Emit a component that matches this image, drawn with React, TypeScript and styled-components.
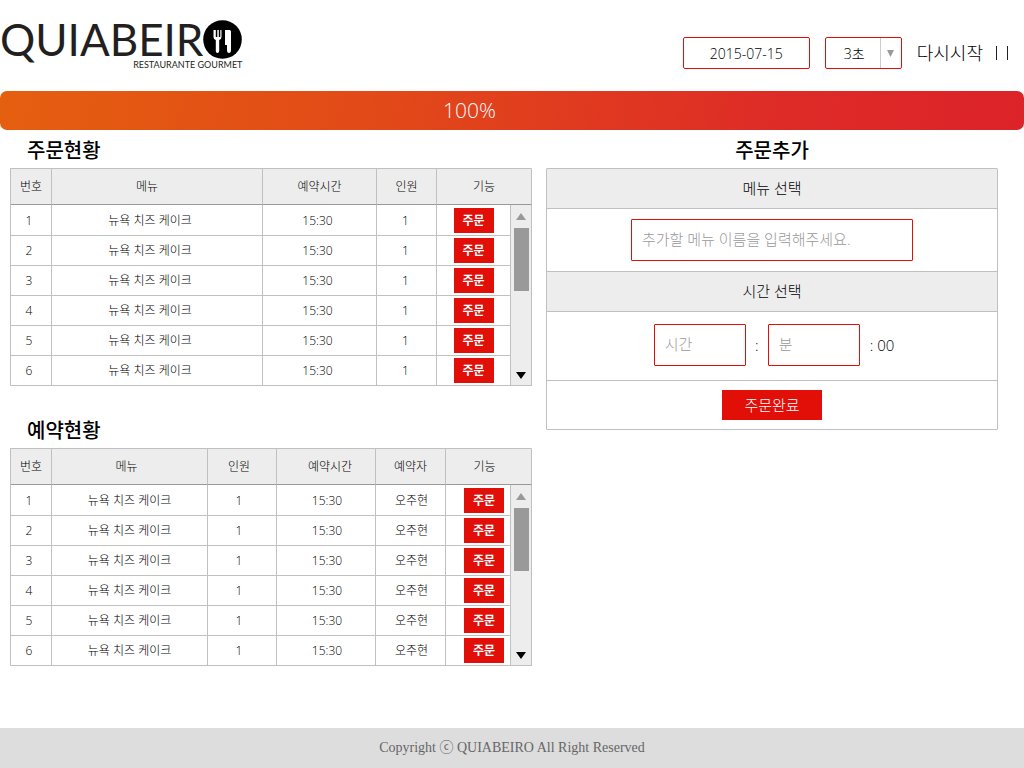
import React from "react";
import styled, { createGlobalStyle } from "styled-components";

const RED = "#e20e08";
const LINE = "#c0c0c0";
const SHADE = "#ededed";

const GlobalStyle = createGlobalStyle`
  * { box-sizing: border-box; }
  body {
    margin: 0;
    background: #fff;
    color: #000;
    font-family: "Open Sans", "Noto Sans CJK KR", sans-serif;
    font-weight: 300;
  }
  button, input, select { font: inherit; color: inherit; }
`;

const Page = styled.div`
  display: flex;
  flex-direction: column;
  min-height: 100vh;
`;

const Header = styled.header`
  display: flex;
  justify-content: space-between;
  align-items: flex-start;
  height: 91px;
  padding-right: 16px;
`;

const Logo = styled.a`
  display: flex;
  flex-direction: column;
  align-items: flex-end;
  padding-top: 20px;
  color: #231f20;
  font-family: Lato, sans-serif;
  text-decoration: none;
`;

const LogoTop = styled.span`
  display: flex;
  height: 39px;
`;

const LogoWord = styled.span`
  font-size: 44px;
  line-height: 39px;
  font-weight: 400;
`;

const LogoSub = styled.span`
  font-size: 9px;
  line-height: 12px;
  font-weight: 400;
`;

const Controls = styled.form`
  display: flex;
  align-items: center;
  padding-top: 37px;
`;

const DateInput = styled.input`
  width: 127px;
  height: 32px;
  margin-right: 15px;
  padding: 0;
  border: 1px solid ${RED};
  border-radius: 2px;
  background: #fff;
  font-size: 14px;
  text-align: center;
`;

const SelectWrap = styled.div`
  position: relative;
  width: 77px;
  height: 32px;
  margin-right: 15px;
`;

const Select = styled.select`
  width: 100%;
  height: 100%;
  padding: 0 22px 0 18px;
  appearance: none;
  border: 1px solid ${RED};
  border-radius: 2px;
  background: #fff;
  font-size: 14px;
`;

const SelectArrow = styled.span`
  position: absolute;
  top: 1px;
  right: 1px;
  bottom: 1px;
  display: flex;
  align-items: center;
  justify-content: center;
  width: 21px;
  border-left: 1px solid #ccc;
  pointer-events: none;
`;

const Restart = styled.button`
  display: flex;
  align-items: center;
  gap: 12px;
  padding: 0;
  border: 0;
  background: none;
  font-size: 18px;
  line-height: 32px;
`;

const Progress = styled.div`
  height: 39px;
  padding-right: 85px;
  border-radius: 7px;
  background: linear-gradient(100deg, #e55f10 0%, #e24a18 36%, #de2b27 76%, #dc2329 100%);
  color: #fff;
  font-size: 21px;
  line-height: 39px;
  text-align: center;
`;

const Main = styled.main`
  display: grid;
  grid-template-columns: 522fr 452fr;
  align-items: start;
  gap: 14px;
  flex: 1;
  padding: 0 26px 20px 10px;
`;

const Lists = styled.div`
  display: flex;
  flex-direction: column;
  gap: 24px;
`;

const Heading = styled.h2<{ $center?: boolean }>`
  height: 38px;
  margin: 0;
  padding-left: ${(p) => (p.$center ? 0 : 17)}px;
  color: #000;
  font-size: 20px;
  line-height: 42px;
  font-weight: 500;
  text-align: ${(p) => (p.$center ? "center" : "left")};
`;

const Table = styled.table`
  width: 100%;
  table-layout: fixed;
  border-spacing: 0;
  border-top: 1px solid ${LINE};
  border-left: 1px solid ${LINE};
  border-radius: 1px;
  font-size: 12px;
  line-height: 18px;
`;

const Col = styled.col<{ $w?: number }>`
  width: ${(p) => (p.$w ? `${p.$w}px` : "auto")};
`;

const Th = styled.th<{ $left?: number; $right?: number }>`
  height: 36px;
  padding: 0 ${(p) => p.$right ?? 0}px 0 ${(p) => p.$left ?? 0}px;
  border-right: 1px solid ${LINE};
  border-bottom: 1px solid #999;
  background: ${SHADE};
  font-weight: inherit;
`;

const Td = styled.td<{ $left?: number; $right?: number }>`
  height: 30px;
  padding: 0 ${(p) => p.$right ?? 0}px 0 ${(p) => p.$left ?? 0}px;
  border-right: 1px solid ${LINE};
  border-bottom: 1px solid ${LINE};
  text-align: center;
  tr:first-child > & {
    height: 31px;
    padding-top: 1px;
  }
`;

const ScrollCell = styled.td`
  padding: 0;
  border-right: 1px solid ${LINE};
  border-bottom: 1px solid ${LINE};
  background: ${SHADE};
  vertical-align: top;
`;

const ScrollBar = styled.div`
  display: flex;
  flex-direction: column;
  align-items: center;
  height: 180px;
  padding: 8px 0 6px;
`;

const Thumb = styled.span`
  width: 15px;
  height: 63px;
  margin-top: 8px;
  margin-bottom: auto;
  background: #999;
`;

const OrderButton = styled.button`
  display: block;
  width: 40px;
  height: 25px;
  margin: 0 auto;
  padding: 0;
  border: 0;
  background: ${RED};
  color: #fff;
  font-size: 12px;
  line-height: 24px;
  font-weight: 700;
`;

const Panel = styled.form`
  border: 1px solid ${LINE};
  border-radius: 1px;
  font-size: 15px;
`;

const PanelTitle = styled.label`
  display: block;
  height: 40px;
  border-bottom: 1px solid ${LINE};
  background: ${SHADE};
  line-height: 38px;
  text-align: center;
`;

const PanelRow = styled.div<{ $height: number; $left?: number }>`
  display: flex;
  justify-content: center;
  align-items: center;
  height: ${(p) => p.$height}px;
  padding-left: ${(p) => p.$left ?? 0}px;
  & + & { border-top: 1px solid ${LINE}; }
  &:has(+ ${PanelTitle}) { border-bottom: 1px solid ${LINE}; }
`;

const TimeRow = styled(PanelRow)`
  padding-bottom: 2px;
`;

const Field = styled.input<{ $width: number }>`
  width: ${(p) => p.$width}px;
  height: 42px;
  padding: 0 10px 2px;
  border: 1px solid ${RED};
  border-radius: 1px;
  background: #fff;
  &::placeholder { color: #999; opacity: 1; }
`;

const Colon = styled.span`
  width: 22px;
  text-align: center;
`;

const Seconds = styled.span`
  padding-left: 10px;
`;

const Submit = styled.button`
  width: 100px;
  height: 30px;
  padding: 0;
  border: 0;
  background: ${RED};
  color: #fff;
  font-size: 15px;
  line-height: 30px;
`;

const Footer = styled.footer`
  height: 40px;
  background: #ddd;
  color: #666;
  font-family: "Liberation Serif", "Noto Sans CJK KR", serif;
  font-size: 14px;
  font-weight: 400;
  line-height: 40px;
  text-align: center;
`;

type Column = {
  title: string;
  value: (i: number) => string;
  width?: number;
  head?: [number, number];
  body?: [number, number];
};

const cake = () => "뉴욕 치즈 케이크";
const one = () => "1";
const time = () => "15:30";

const orderColumns: Column[] = [
  { title: "번호", value: (i) => String(i), width: 41, body: [0, 4] },
  { title: "메뉴", value: cake, head: [0, 20], body: [0, 14] },
  { title: "예약시간", value: time, width: 114, body: [0, 4] },
  { title: "인원", value: one, width: 60, body: [0, 2] },
];

const bookingColumns: Column[] = [
  { title: "번호", value: (i) => String(i), width: 41, body: [0, 4] },
  { title: "메뉴", value: cake, head: [0, 6] },
  { title: "인원", value: one, width: 69, head: [0, 6], body: [0, 6] },
  { title: "예약시간", value: time, width: 99, head: [8, 0], body: [2, 0] },
  { title: "예약자", value: () => "오주현", width: 70, body: [2, 0] },
];

function Triangle({ up, fill, size = 10 }: { up?: boolean; fill: string; size?: number }) {
  return (
    <svg width={size} height="7" viewBox="0 0 10 7" preserveAspectRatio="none" aria-hidden="true">
      <path d={up ? "M5 0 10 7H0Z" : "M0 0H10L5 7Z"} fill={fill} />
    </svg>
  );
}

function OrderTable({ columns, actionWidth, actionLeft }: { columns: Column[]; actionWidth: number; actionLeft?: number }) {
  return (
    <Table>
      <colgroup>
        {columns.map((c) => <Col key={c.title} $w={c.width} />)}
        <Col $w={actionWidth} />
        <Col $w={21} />
      </colgroup>
      <thead>
        <tr>
          {columns.map((c) => (
            <Th key={c.title} scope="col" $left={c.head?.[0]} $right={c.head?.[1]}>{c.title}</Th>
          ))}
          <Th scope="col" colSpan={2} $right={actionLeft ? 8 : 0}>기능</Th>
        </tr>
      </thead>
      <tbody>
        {[1, 2, 3, 4, 5, 6].map((n) => (
          <tr key={n}>
            {columns.map((c) => (
              <Td key={c.title} $left={c.body?.[0]} $right={c.body?.[1]}>{c.value(n)}</Td>
            ))}
            <Td $left={actionLeft}><OrderButton type="button">주문</OrderButton></Td>
            {n === 1 && (
              <ScrollCell rowSpan={6}>
                <ScrollBar>
                  <Triangle up fill="#999" />
                  <Thumb />
                  <Triangle fill="#000" />
                </ScrollBar>
              </ScrollCell>
            )}
          </tr>
        ))}
      </tbody>
    </Table>
  );
}

export default function App() {
  return (
    <Page>
      <GlobalStyle />
      <Header>
        <Logo href="#">
          <LogoTop>
            <LogoWord>QUIABEIR</LogoWord>
            <svg width="39" height="39" viewBox="0 0 39 39" role="img" aria-label="O">
              <circle cx="19.500" cy="19.500" r="19.300" fill="#000" />
              <path d="M10.500 10v7q0 2.500 2.300 3v11q0 2 1.700 2t1.700-2V20q2.300-.5 2.300-3v-7h-1.200v7h-1.500v-7h-1.500v7h-1.500v-7Z" fill="#fff" />
              <path d="M22 10h4.500q1.500 0 1.500 1.500V30q0 3-2 3t-2-3v-5h-2Z" fill="#fff" />
            </svg>
          </LogoTop>
          <LogoSub>RESTAURANTE GOURMET</LogoSub>
        </Logo>
        <Controls>
          <DateInput aria-label="날짜" defaultValue="2015-07-15" />
          <SelectWrap>
            <Select aria-label="갱신 간격" defaultValue="3">
              <option value="3">3초</option>
            </Select>
            <SelectArrow><Triangle fill="#999" size={7} /></SelectArrow>
          </SelectWrap>
          <Restart type="button">
            다시시작
            <svg width="13" height="14" viewBox="0 0 13 14" aria-hidden="true">
              <path d="M1.500 0V14M12.500 0V14" stroke="#222" />
            </svg>
          </Restart>
        </Controls>
      </Header>
      <Progress role="progressbar" aria-valuenow={100} aria-valuemin={0} aria-valuemax={100}>100%</Progress>
      <Main>
        <Lists>
          <section>
            <Heading>주문현황</Heading>
            <OrderTable columns={orderColumns} actionWidth={74} />
          </section>
          <section>
            <Heading>예약현황</Heading>
            <OrderTable columns={bookingColumns} actionWidth={65} actionLeft={12} />
          </section>
        </Lists>
        <section>
          <Heading $center>주문추가</Heading>
          <Panel>
            <PanelTitle htmlFor="menu">메뉴 선택</PanelTitle>
            <PanelRow $height={63}>
              <Field id="menu" $width={282} placeholder="추가할 메뉴 이름을 입력해주세요." />
            </PanelRow>
            <PanelTitle htmlFor="hour">시간 선택</PanelTitle>
            <TimeRow $height={68} $left={4}>
              <Field id="hour" $width={92} placeholder="시간" />
              <Colon>:</Colon>
              <Field $width={92} aria-label="분" placeholder="분" />
              <Seconds>: 00</Seconds>
            </TimeRow>
            <PanelRow $height={49}>
              <Submit type="button">주문완료</Submit>
            </PanelRow>
          </Panel>
        </section>
      </Main>
      <Footer>Copyright ⓒ QUIABEIRO All Right Reserved</Footer>
    </Page>
  );
}
